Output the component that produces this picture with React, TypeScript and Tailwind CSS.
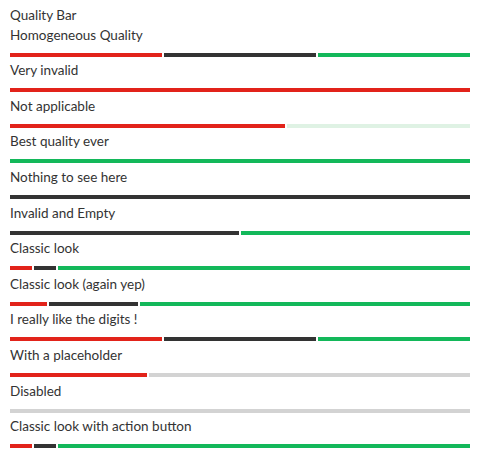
import React from "react"

type Seg = { color: string; width: string }

interface Row {
  label: string
  segs: Seg[]
}

const RED = "bg-[#e2231a]"
const DARK = "bg-[#333333]"
const GREEN = "bg-[#13b85a]"
const PALE = "bg-[#dff2e4]"
const GRAY = "bg-[#d3d3d3]"

const thirds: Seg[] = [
  { color: RED, width: "152px" },
  { color: DARK, width: "152px" },
  { color: GREEN, width: "152px" },
]

const classic: Seg[] = [
  { color: RED, width: "22px" },
  { color: DARK, width: "22px" },
  { color: GREEN, width: "auto" },
]

const rows: Row[] = [
  { label: "Homogeneous Quality", segs: thirds },
  { label: "Very invalid", segs: [{ color: RED, width: "auto" }] },
  {
    label: "Not applicable",
    segs: [
      { color: RED, width: "275px" },
      { color: PALE, width: "auto" },
    ],
  },
  { label: "Best quality ever", segs: [{ color: GREEN, width: "auto" }] },
  { label: "Nothing to see here", segs: [{ color: DARK, width: "auto" }] },
  {
    label: "Invalid and Empty",
    segs: [
      { color: DARK, width: "229px" },
      { color: GREEN, width: "auto" },
    ],
  },
  { label: "Classic look", segs: classic },
  {
    label: "Classic look (again yep)",
    segs: [
      { color: RED, width: "37px" },
      { color: DARK, width: "89px" },
      { color: GREEN, width: "auto" },
    ],
  },
  { label: "I really like the digits !", segs: thirds },
  {
    label: "With a placeholder",
    segs: [
      { color: RED, width: "137px" },
      { color: GRAY, width: "auto" },
    ],
  },
  { label: "Disabled", segs: [{ color: GRAY, width: "auto" }] },
  { label: "Classic look with action button", segs: classic },
]

function QualityBar({ segs }: { segs: Seg[] }) {
  return (
    <div className="flex gap-[2px] mt-2 h-1">
      {segs.map((s, i) => (
        <div
          key={i}
          className={`${s.color} h-1 ${s.width === "auto" ? "flex-1" : "shrink-0"}`}
          style={s.width === "auto" ? undefined : { width: s.width }}
        />
      ))}
    </div>
  )
}

export default function App() {
  return (
    <div
      className="w-[480px] h-[458px] bg-white px-[10px] pt-[4.6px] text-[13.5px] leading-5 text-[#333333] overflow-hidden"
      style={{ fontFamily: "Lato, 'Open Sans', sans-serif" }}
    >
      <div>Quality Bar</div>
      {rows.map((r) => (
        <div key={r.label} className="pb-[3.6px]">
          <div>{r.label}</div>
          <QualityBar segs={r.segs} />
        </div>
      ))}
    </div>
  )
}
